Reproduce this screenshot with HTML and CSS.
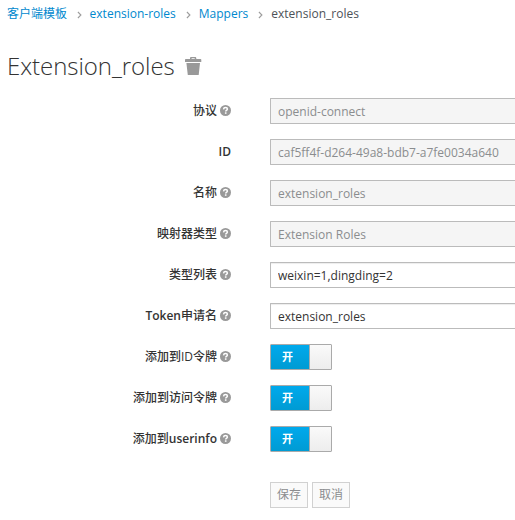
FILE: index.html
```html
<!DOCTYPE html>
<html lang="zh-CN">
<head>
<meta charset="utf-8">
<title>Extension_roles</title>
<link rel="stylesheet" href="styles.css">
</head>
<body>
<svg class="sprite" aria-hidden="true">
  <symbol id="help" viewBox="0 0 11 11">
    <circle cx="5.5" cy="5.5" r="5.5" fill="#999"/>
    <path d="M3.500 4.300C3.700 3 4.500 2.600 5.500 2.600c1.200 0 1.900.6 1.900 1.400 0 1.300-1.700 1.200-1.700 2.400" fill="none" stroke="#fff" stroke-width="1.500"/>
    <path d="M4.900 7.300h1.600v1.500H4.900z" fill="#fff"/>
  </symbol>
  <symbol id="chevron" viewBox="0 0 5 8">
    <path d="M.9 1l3 3-3 3" fill="none" stroke="#9c9c9c" stroke-width="1.100"/>
  </symbol>
</svg>
<ol class="breadcrumb">
  <li><a>客户端模板</a></li>
  <li><svg class="chevron"><use href="#chevron"/></svg><a>extension-roles</a></li>
  <li><svg class="chevron"><use href="#chevron"/></svg><a>Mappers</a></li>
  <li><svg class="chevron"><use href="#chevron"/></svg><span>extension_roles</span></li>
</ol>
<h1>Extension_roles
  <svg class="trash" viewBox="0 0 17 18"><path d="M5 2V1.200C5 .5 5.500 0 6.200 0h3.900c.7 0 1.200.5 1.200 1.200V2h4.200c.5 0 .8.300.8.800V5H0V2.800c0-.5.300-.8.800-.8zm1.600 0h3.100v-.7H6.600zM1.400 6h13.600l-1.300 12H2.800z" fill="#999"/></svg>
</h1>
<form>
  <div class="row"><label>协议<svg class="help"><use href="#help"/></svg></label><input value="openid-connect" disabled></div>
  <div class="row"><label><b>ID</b></label><input value="caf5ff4f-d264-49a8-bdb7-a7fe0034a640" disabled></div>
  <div class="row"><label>名称<svg class="help"><use href="#help"/></svg></label><input value="extension_roles" disabled></div>
  <div class="row"><label>映射器类型<svg class="help"><use href="#help"/></svg></label><input value="Extension Roles" disabled></div>
  <div class="row"><label>类型列表<svg class="help"><use href="#help"/></svg></label><input value="weixin=1,dingding=2"></div>
  <div class="row"><label><span><b>Token</b>申请名</span><svg class="help"><use href="#help"/></svg></label><input value="extension_roles"></div>
  <div class="row"><label>添加到ID令牌<svg class="help"><use href="#help"/></svg></label><div class="switch"><span class="on">开</span><span class="knob"></span></div></div>
  <div class="row"><label>添加到访问令牌<svg class="help"><use href="#help"/></svg></label><div class="switch"><span class="on">开</span><span class="knob"></span></div></div>
  <div class="row"><label><span>添加到<b>userinfo</b></span><svg class="help"><use href="#help"/></svg></label><div class="switch"><span class="on">开</span><span class="knob"></span></div></div>
  <div class="actions"><button type="button" disabled>保存</button><button type="button" disabled>取消</button></div>
</form>
</body>
</html>
```
FILE: styles.css
```css
* {
  box-sizing: border-box;
}

body {
  margin: 0;
  background: #fff;
  color: #333;
  font: 12px/20px "Open Sans", "Noto Sans CJK SC", sans-serif;
}

.sprite {
  display: none;
}

.breadcrumb {
  display: flex;
  height: 20px;
  margin: 4px 0 0 7px;
  padding: 0;
  list-style: none;
}

.breadcrumb li {
  display: flex;
  align-items: center;
  white-space: nowrap;
}

.breadcrumb a {
  color: #0088ce;
}

.breadcrumb span {
  color: #4d5258;
}

.breadcrumb li:first-child {
  width: 59.6px;
}

.chevron {
  width: 5px;
  height: 8px;
  margin: 1px 8px 0 10px;
}

h1 {
  display: flex;
  align-items: center;
  gap: 10px;
  height: 34px;
  margin: 25px 0 0 7px;
  font-size: 24px;
  font-weight: 300;
  letter-spacing: -0.05px;
  line-height: 34px;
}

.trash {
  width: 17px;
  height: 18px;
}

form {
  display: flex;
  flex-direction: column;
  gap: 15px;
  margin-top: 15px;
}

.row {
  display: flex;
  height: 26px;
}

label {
  display: flex;
  align-items: center;
  justify-content: flex-end;
  gap: 3px;
  width: 231px;
  margin-right: 39px;
  font-weight: 500;
}

label b {
  font-weight: 600;
}

.help {
  width: 11px;
  height: 11px;
  margin-bottom: 1px;
}

input {
  flex: 1;
  min-width: 0;
  height: 26px;
  padding: 2px 7px;
  border: 1px solid #bbb;
  border-right: 0;
  border-radius: 1px 0 0 1px;
  background: #fff;
  box-shadow: inset 0 1px 1px rgba(0, 0, 0, 0.075);
  color: #333;
  font: inherit;
}

input:disabled {
  background: #f5f5f5;
  color: #8b8d8f;
  box-shadow: none;
}

.switch {
  display: flex;
  width: 62px;
  height: 26px;
  border: 1px solid #aaa;
  border-radius: 1px;
}

.on {
  width: 38px;
  padding-left: 11px;
  background: linear-gradient(#00a9ec, #009bd3);
  color: #fff;
  font-size: 11px;
  font-weight: 700;
  line-height: 24px;
}

.knob {
  flex: 1;
  border-left: 1px solid #aaa;
  background: linear-gradient(#fafafa, #ededed);
}

.actions {
  display: flex;
  gap: 4px;
  margin: 15px 0 0 270px;
}

button {
  width: 38px;
  height: 26px;
  padding: 0;
  border: 1px solid #d1d1d1;
  background: #fafafa;
  color: #8b8d8f;
  font: inherit;
}
```
